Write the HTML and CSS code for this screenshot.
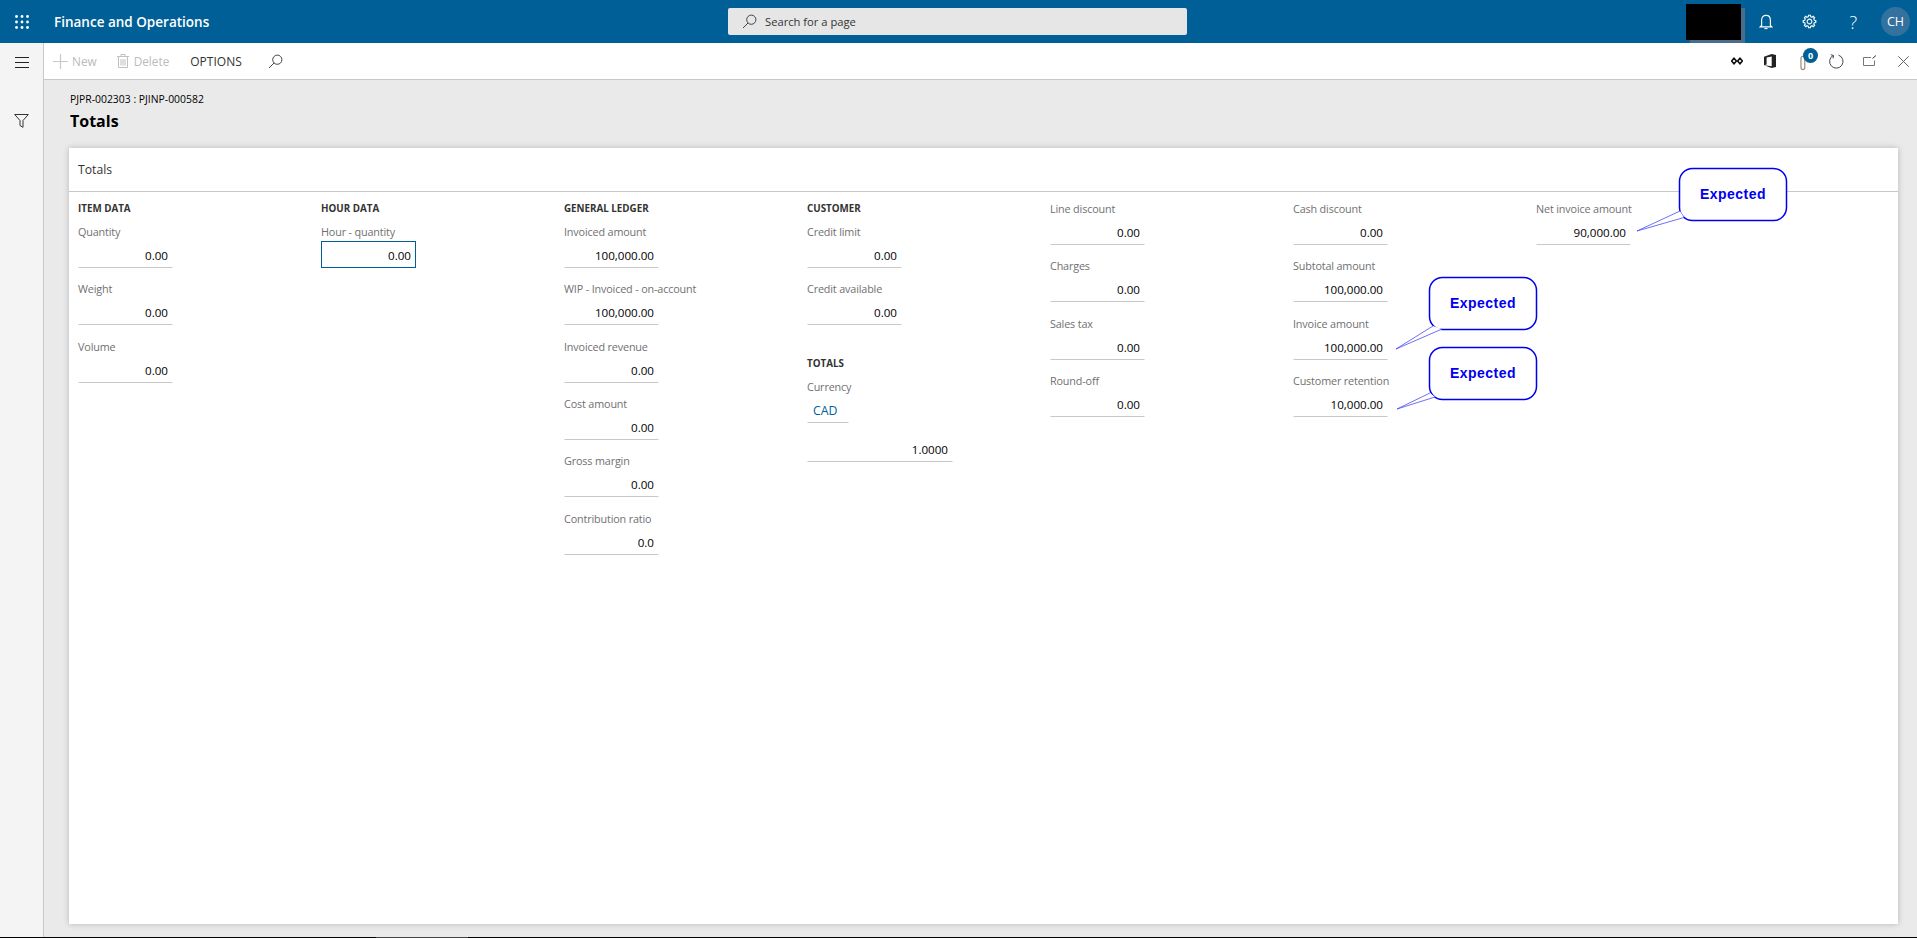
FILE: index.html
```html
<!DOCTYPE html>
<html lang="en">
<head>
    <meta charset="UTF-8">
    <title>Totals</title>
    <link rel="stylesheet" href="styles.css">
</head>
<body>
    <header class="topbar">
        <div class="waffle">
            <svg width="16" height="16" viewBox="0 0 16 16" fill="#fff">
                <circle cx="2.5" cy="2.5" r="1.4"/><circle cx="8" cy="2.5" r="1.4"/><circle cx="13.5" cy="2.5" r="1.4"/>
                <circle cx="2.5" cy="8" r="1.4"/><circle cx="8" cy="8" r="1.4"/><circle cx="13.5" cy="8" r="1.4"/>
                <circle cx="2.5" cy="13.5" r="1.4"/><circle cx="8" cy="13.5" r="1.4"/><circle cx="13.5" cy="13.5" r="1.4"/>
            </svg>
        </div>
        <div class="appName">Finance and Operations</div>
        <div class="searchBox">
            <svg width="15" height="15" viewBox="0 0 15 15" fill="none" stroke="#444" stroke-width="1">
                <circle cx="9.3" cy="5.7" r="4.6"/><path d="M6 9 L1 14"/>
            </svg>
            <span>Search for a page</span>
        </div>
        <div class="topRight">
            <div class="redacted"></div>
            <div class="topIcon">
                <svg width="14" height="16" viewBox="0 0 16 18" fill="none" stroke="#fff" stroke-width="1.3">
                    <path d="M3 13 V7 C3 3.5 5 1.5 8 1.5 C11 1.5 13 3.5 13 7 V13 L14.5 14.5 H1.5 Z"/><path d="M6.3 16.5 H9.7"/>
                </svg>
            </div>
            <div class="topIcon">
                <svg width="17" height="17" viewBox="-10 -10 20 20" fill="none" stroke="#fff" stroke-width="1.3">
                    <polygon points="5.63,-1.4 7.41,-1.17 7.41,1.17 5.63,1.4 4.97,2.99 6.07,4.41 4.41,6.07 2.99,4.97 1.4,5.63 1.17,7.41 -1.17,7.41 -1.4,5.63 -2.99,4.97 -4.41,6.07 -6.07,4.41 -4.97,2.99 -5.63,1.4 -7.41,1.17 -7.41,-1.17 -5.63,-1.4 -4.97,-2.99 -6.07,-4.41 -4.41,-6.07 -2.99,-4.97 -1.4,-5.63 -1.17,-7.41 1.17,-7.41 1.4,-5.63 2.99,-4.97 4.41,-6.07 6.07,-4.41 4.97,-2.99"/>
                    <circle r="2.8"/>
                </svg>
            </div>
            <div class="topIcon helpIcon">?</div>
            <div class="avatar">CH</div>
        </div>
    </header>

    <div class="shell">
        <nav class="sidebar">
            <div class="sideBtn hamburger">
                <svg width="14" height="11" viewBox="0 0 14 11" stroke="#222" stroke-width="1">
                    <path d="M0 .5 H14 M0 5.5 H14 M0 10.5 H14"/>
                </svg>
            </div>
            <div class="sideBtn filter">
                <svg width="15" height="14" viewBox="0 0 15 14" fill="none" stroke="#333" stroke-width="1">
                    <path d="M.7 .5 H14.3 L9 6.5 V13.3 L6 11.5 V6.5 Z"/>
                </svg>
            </div>
        </nav>

        <main class="content">
            <div class="toolbar">
                <div class="toolBtn disabled">
                    <svg width="15" height="15" viewBox="0 0 15 15" stroke="#c8c8c8" stroke-width="1.2">
                        <path d="M7.5 0 V15 M0 7.5 H15"/>
                    </svg>
                    <span>New</span>
                </div>
                <div class="toolBtn disabled trash">
                    <svg width="12" height="14" viewBox="0 0 12 14" fill="none" stroke="#c0c0c0" stroke-width="1">
                        <path d="M0 2.5 H12 M4 2.5 V.5 H8 V2.5 M1.5 2.5 V13.5 H10.5 V2.5 M4 5 V11.5 M6 5 V11.5 M8 5 V11.5"/>
                    </svg>
                    <span>Delete</span>
                </div>
                <div class="toolBtn options">OPTIONS</div>
                <svg class="toolSearch" width="15" height="15" viewBox="0 0 15 15" fill="none" stroke="#444" stroke-width="1">
                    <circle cx="9.3" cy="5.7" r="4.6"/><path d="M6 9 L1 14"/>
                </svg>
                <div class="toolRight">
                    <div class="toolIcon">
                        <svg width="12" height="8" viewBox="0 0 12 8" fill="none" stroke="#111" stroke-width="1.6">
                            <path d="M3 1.2 L5.4 4 L3 6.8 L.6 4 Z M9 1.2 L11.4 4 L9 6.8 L6.6 4 Z"/>
                        </svg>
                    </div>
                    <div class="toolIcon">
                        <svg width="12" height="14" viewBox="0 0 12 14" fill="#222">
                            <path d="M0 2.7 L7.7 0 L12 1 V13 L7.7 14 L0 11.3 L7.7 12.2 V2.4 L2.6 3.6 V10.6 L0 11.3 Z"/>
                        </svg>
                    </div>
                    <div class="toolIcon clip">
                        <svg width="8" height="16" viewBox="0 0 9 17" fill="none" stroke="#a08f86" stroke-width="1.4">
                            <path d="M6.5 4 V13 C6.5 15 5.6 16 4.4 16 C3 16 2.2 15 2.2 13 V3.5 C2.2 2 3 1 4.3 1 C5.7 1 6.8 2 6.8 4"/>
                        </svg>
                        <span class="badge">0</span>
                    </div>
                    <div class="toolIcon">
                        <svg width="15" height="15" viewBox="0 0 15 15" fill="none" stroke="#3d4a55" stroke-width="1">
                            <path d="M4.2 1.5 A6.7 6.7 0 1 0 9.5 1.1"/><path d="M1.8 .7 L4.6 1.6 L4 4.4"/>
                        </svg>
                    </div>
                    <div class="toolIcon">
                        <svg width="14" height="12" viewBox="0 0 14 12" fill="none" stroke="#777" stroke-width="1">
                            <path d="M8 2.5 H.5 V10.5 H11.5 V5.5"/><path d="M9.5 3.5 L13 .5" stroke="#333"/>
                        </svg>
                    </div>
                    <div class="toolIcon">
                        <svg width="11" height="11" viewBox="0 0 11 11" stroke="#566" stroke-width="1">
                            <path d="M.3 .3 L10.7 10.7 M10.7 .3 L.3 10.7"/>
                        </svg>
                    </div>
                </div>
            </div>

            <div class="page">
                <div class="crumb">PJPR-002303 : PJINP-000582</div>
                <h1 class="pageTitle">Totals</h1>
                <section class="card">
                    <div class="cardHeader">Totals</div>
                    <div class="columns">
                        <div class="column">
                            <h3 class="groupTitle">ITEM DATA</h3>
                            <div class="field"><label>Quantity</label><div class="value">0.00</div></div>
                            <div class="field"><label>Weight</label><div class="value">0.00</div></div>
                            <div class="field"><label>Volume</label><div class="value">0.00</div></div>
                        </div>
                        <div class="column">
                            <h3 class="groupTitle">HOUR DATA</h3>
                            <div class="field"><label>Hour - quantity</label><div class="value focused">0.00</div></div>
                        </div>
                        <div class="column">
                            <h3 class="groupTitle">GENERAL LEDGER</h3>
                            <div class="field"><label>Invoiced amount</label><div class="value">100,000.00</div></div>
                            <div class="field"><label>WIP - Invoiced - on-account</label><div class="value">100,000.00</div></div>
                            <div class="field"><label>Invoiced revenue</label><div class="value">0.00</div></div>
                            <div class="field"><label>Cost amount</label><div class="value">0.00</div></div>
                            <div class="field"><label>Gross margin</label><div class="value">0.00</div></div>
                            <div class="field"><label>Contribution ratio</label><div class="value">0.0</div></div>
                        </div>
                        <div class="column">
                            <h3 class="groupTitle">CUSTOMER</h3>
                            <div class="field"><label>Credit limit</label><div class="value">0.00</div></div>
                            <div class="field"><label>Credit available</label><div class="value">0.00</div></div>
                            <h3 class="groupTitle totalsTitle">TOTALS</h3>
                            <div class="field"><label>Currency</label><div class="value currency">CAD</div></div>
                            <div class="value rate">1.0000</div>
                        </div>
                        <div class="column">
                            <div class="field"><label>Line discount</label><div class="value">0.00</div></div>
                            <div class="field"><label>Charges</label><div class="value">0.00</div></div>
                            <div class="field"><label>Sales tax</label><div class="value">0.00</div></div>
                            <div class="field"><label>Round-off</label><div class="value">0.00</div></div>
                        </div>
                        <div class="column">
                            <div class="field"><label>Cash discount</label><div class="value">0.00</div></div>
                            <div class="field"><label>Subtotal amount</label><div class="value">100,000.00</div></div>
                            <div class="field"><label>Invoice amount</label><div class="value">100,000.00</div></div>
                            <div class="field"><label>Customer retention</label><div class="value">10,000.00</div></div>
                        </div>
                        <div class="column">
                            <div class="field"><label>Net invoice amount</label><div class="value">90,000.00</div></div>
                        </div>
                    </div>
                </section>
            </div>
        </main>
    </div>
    <div class="bottomLine"><div class="bottomThumb"></div></div>

    <!-- callouts drawn on top of the screenshot -->
    <svg class="annotations" width="1917" height="938" viewBox="0 0 1917 938">
        <rect class="calloutBox" x="1679.5" y="168.5" width="107" height="52" rx="13"/>
        <path class="calloutTail" d="M1680 211 L1637 231 L1684 217.5"/>
        <text class="calloutText" x="1733" y="199">Expected</text>

        <rect class="calloutBox" x="1429.5" y="277.5" width="107" height="52" rx="13"/>
        <path class="calloutTail" d="M1433 326 L1396 349 L1442 329"/>
        <text class="calloutText" x="1483" y="308">Expected</text>

        <rect class="calloutBox" x="1429.5" y="347.5" width="107" height="52" rx="13"/>
        <path class="calloutTail" d="M1430 393 L1397 409 L1435 397"/>
        <text class="calloutText" x="1483" y="378">Expected</text>
    </svg>
</body>
</html>
```

FILE: styles.css
```css
* {
    box-sizing: border-box;
}
html, body {
    margin: 0;
    height: 938px;
    overflow: hidden;
}
body {
    position: relative;
    font-family: "Open Sans", "Noto Sans", sans-serif;
    font-size: 11.6px;
    background-color: #eaeaea;
    color: #000;
}

/* top bar */
.topbar {
    display: flex;
    align-items: center;
    height: 43px;
    background-color: #005f96;
    color: #fff;
}
.waffle {
    display: flex;
    justify-content: center;
    width: 43px;
    margin-top: 1px;
}
.appName {
    width: 674px;
    margin-left: 11px;
    font-size: 13.5px;
    font-weight: 600;
}
.searchBox {
    display: flex;
    align-items: center;
    gap: 8px;
    width: 459px;
    height: 27px;
    padding-left: 14px;
    background-color: #e6e6e6;
    border-radius: 2px;
    color: #333;
    font-size: 11.2px;
}
.topRight {
    display: flex;
    align-items: center;
    margin-left: auto;
    padding-right: 7px;
}
.redacted {
    width: 55px;
    height: 36px;
    margin-right: 15px;
    background-color: #000;
    box-shadow: 4px 4px 0 #4a6d8e;
}
.topIcon {
    display: flex;
    justify-content: center;
    width: 20px;
    margin-right: 23.3px;
}
.helpIcon {
    padding-left: 1px;
    font-size: 18px;
    line-height: 24px;
    font-weight: 300;
}
.avatar {
    width: 29px;
    height: 29px;
    margin-left: -5px;
    border-radius: 50%;
    background-color: #33719f;
    font-size: 12.5px;
    line-height: 29px;
    text-align: center;
}

/* page frame */
.shell {
    display: flex;
    height: 894px;
}
.sidebar {
    width: 44px;
    background-color: #f4f4f4;
    border-right: 1px solid #c8c8c8;
}
.sideBtn {
    display: flex;
    justify-content: center;
}
.hamburger {
    padding-top: 14px;
}
.filter {
    padding-top: 46px;
}
.content {
    flex: 1;
    min-width: 0;
}
.bottomLine {
    height: 1px;
    background-color: #000;
}
.bottomThumb {
    width: 92px;
    height: 1px;
    margin-left: 376px;
    background-color: #444;
}

/* action bar */
.toolbar {
    display: flex;
    align-items: center;
    height: 37px;
    padding-left: 9px;
    background-color: #fff;
    border-bottom: 1px solid #c8c8c8;
}
.toolBtn {
    display: flex;
    align-items: center;
    font-size: 11.8px;
}
.toolBtn.disabled {
    gap: 4px;
    margin-right: 21px;
    color: #bbb;
}
.toolBtn.trash {
    gap: 5px;
    margin-left: -1px;
}
.toolBtn.options {
    color: #333;
    font-size: 12px;
}
.toolSearch {
    margin-left: 26px;
}
.toolRight {
    display: flex;
    align-items: center;
    gap: 13.3px;
    margin-left: auto;
    padding-right: 4px;
}
.toolIcon {
    position: relative;
    display: flex;
    justify-content: center;
    width: 20px;
}
.badge {
    position: absolute;
    top: -3px;
    left: 10px;
    width: 15px;
    height: 15px;
    border-radius: 50%;
    background-color: #005f96;
    color: #fff;
    font-size: 9px;
    font-weight: 700;
    line-height: 15px;
    text-align: center;
}
.clip {
    padding-top: 4px;
}

/* form */
.page {
    padding: 12px 19px 0 25px;
}
.crumb {
    font-size: 10.4px;
    line-height: 15px;
    padding-left: 1px;
}
.pageTitle {
    margin: 2px 0 0;
    padding-left: 1px;
    font-size: 16px;
    font-weight: 700;
    line-height: 25px;
    height: 39px;
    color: #000;
}
.card {
    height: 776px;
    background-color: #fff;
    box-shadow: 0 0 6px rgba(0, 0, 0, 0.22);
}
.cardHeader {
    height: 44px;
    padding-left: 9px;
    border-bottom: 1px solid #c8c8c8;
    font-size: 12.2px;
    line-height: 43px;
    color: #333;
}
.columns {
    display: grid;
    grid-template-columns: repeat(7, 243px);
    padding: 5px 0 0 9px;
}
.groupTitle {
    margin: 0;
    height: 23px;
    font-size: 9.8px;
    font-weight: 700;
    line-height: 23px;
    color: #333;
}
.totalsTitle {
    margin-top: 26.33px;
}
.field {
    margin-bottom: 9.33px;
}
.field label {
    display: block;
    height: 21px;
    font-size: 10.8px;
    letter-spacing: -0.15px;
    line-height: 24px;
    color: #707070;
    white-space: nowrap;
}
.value {
    width: 95px;
    height: 27px;
    padding-right: 4px;
    border: 1px solid transparent;
    border-bottom-color: #c8c8c8;
    line-height: 27px;
    text-align: right;
}
.value.focused {
    border-color: #005f96;
}
.value.currency {
    width: 42px;
    padding: 0 0 0 5px;
    font-size: 12.3px;
    color: #005f96;
    text-align: left;
}
.value.rate {
    width: 146px;
    margin-top: 12px;
}

/* annotations */
.annotations {
    position: absolute;
    top: 0;
    left: 0;
}
.calloutBox {
    fill: #fff;
    stroke: #0000f0;
    stroke-width: 1.5;
}
.calloutTail {
    fill: #fff;
    stroke: #4a4af5;
    stroke-width: 0.8;
}
.calloutText {
    fill: #0000f0;
    font-family: "Liberation Sans", sans-serif;
    font-size: 14px;
    font-weight: 700;
    letter-spacing: 0.5px;
    text-anchor: middle;
}
```
